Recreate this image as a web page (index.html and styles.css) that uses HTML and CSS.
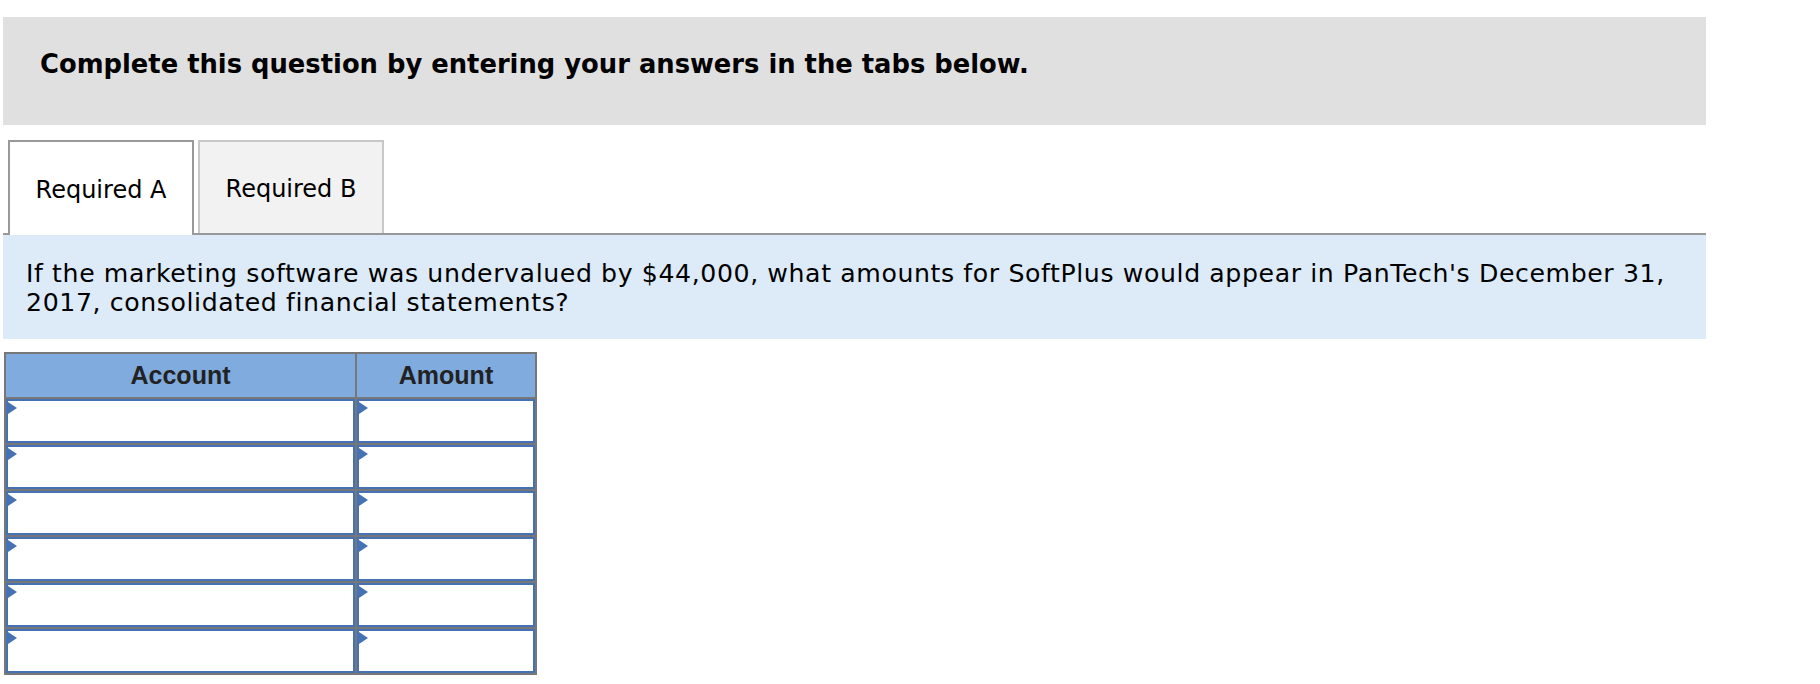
FILE: index.html
```html
<!DOCTYPE html>
<html>
<head>
<meta charset="utf-8">
<link rel="stylesheet" href="styles.css">
</head>
<body>
<div class="page">
  <div class="banner">
    <h2 class="banner-title">Complete this question by entering your answers in the tabs below.</h2>
  </div>
  <div class="tabs">
    <div class="tab tab-active">Required A</div>
    <div class="tab tab-idle">Required B</div>
  </div>
  <div class="prompt">
    <p class="prompt-text">If the marketing software was undervalued by $44,000, what amounts for SoftPlus would appear in PanTech's December 31, 2017, consolidated financial statements?</p>
  </div>
  <table class="answers">
    <thead>
      <tr><th class="col-account">Account</th><th class="col-amount">Amount</th></tr>
    </thead>
    <tbody>
      <tr><td><div class="field"></div></td><td><div class="field"></div></td></tr>
      <tr><td><div class="field"></div></td><td><div class="field"></div></td></tr>
      <tr><td><div class="field"></div></td><td><div class="field"></div></td></tr>
      <tr><td><div class="field"></div></td><td><div class="field"></div></td></tr>
      <tr><td><div class="field"></div></td><td><div class="field"></div></td></tr>
      <tr><td><div class="field"></div></td><td><div class="field"></div></td></tr>
    </tbody>
  </table>
</div>
</body>
</html>
```
FILE: styles.css
```css
html, body {
  margin: 0;
  padding: 0;
  background: #ffffff;
}
.page {
  padding-left: 3px;
  width: 1703px;
  font-family: "DejaVu Sans", Verdana, sans-serif;
  color: #000;
}
.banner {
  margin-top: 17px;
  height: 108px;
  background: #e0e0e0;
  box-sizing: border-box;
  padding: 32px 0 0 37px;
}
.banner-title {
  margin: 0;
  font-size: 25.8px;
  line-height: 30px;
  font-weight: bold;
}
.tabs {
  margin-top: 15px;
  display: flex;
  padding-left: 5px;
  border-bottom: 2px solid #999;
  height: 93px;
}
.tab {
  box-sizing: border-box;
  width: 186px;
  display: flex;
  align-items: center;
  justify-content: center;
  font-size: 24px;
  padding-top: 3px;
}
.tab-active {
  border: 2px solid #999;
  border-bottom: none;
  background: #fff;
  height: 95px;
  margin-bottom: -2px;
}
.tab-idle {
  margin-left: 4px;
  border: 2px solid #c8c8c8;
  border-bottom: none;
  background: #f2f2f2;
  height: 93px;
}
.prompt {
  background: #ddebf8;
  height: 104px;
  box-sizing: border-box;
  padding: 24px 22px 0 23px;
}
.prompt-text {
  margin: 0;
  font-size: 25.2px;
  line-height: 29px;
  letter-spacing: 0.6px;
}
.answers {
  margin: 13px 0 0 1px;
  border-collapse: separate;
  border-spacing: 2px;
  background: #777;
  font-family: "Liberation Sans", Arial, sans-serif;
}
.answers th {
  height: 43px;
  padding: 0;
  background: #80abdf;
  color: #222;
  font-size: 25px;
  font-weight: bold;
  text-align: center;
}
.col-account { width: 349px; }
.col-amount { width: 178px; }
.answers td {
  padding: 0;
  height: 44px;
  background: #fff;
}
.field {
  position: relative;
  box-sizing: border-box;
  height: 44px;
  border: 2px solid #4472b4;
  background: #fff;
}
.field::before {
  content: "";
  position: absolute;
  left: 0;
  top: 1px;
  border-left: 9px solid #4472b4;
  border-top: 6px solid transparent;
  border-bottom: 6px solid transparent;
}
```
